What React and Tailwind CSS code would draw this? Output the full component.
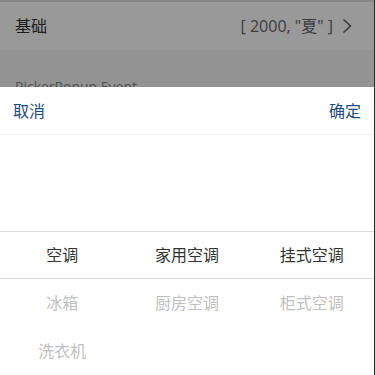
import React from 'react';

const columns = [
  ['空调', '冰箱', '洗衣机'],
  ['家用空调', '厨房空调'],
  ['挂式空调', '柜式空调'],
];

const ROW = 'h-12 flex items-center justify-center text-base';

const PickerColumn = ({ items }) => (
  <div className="flex-1 flex flex-col">
    {/* two empty rows above the selected one */}
    <div className="h-12" />
    <div className="h-12" />
    {items.map((item, i) => (
      <div key={item} className={`${ROW} ${i === 0 ? 'text-[#333]' : 'text-[#bfbfbf]'}`}>
        {item}
      </div>
    ))}
  </div>
);

const App = () => {
  return (
    <div
      className="relative h-[375px] w-full overflow-hidden bg-[#f5f5f5] border-r border-[#2a2a2a]"
      style={{ fontFamily: '"Open Sans", "Noto Sans CJK SC", sans-serif' }}
    >
      {/* page behind the popup */}
      <div className="h-[2px] bg-[#e2e2e2]" />
      <div className="h-12 bg-white flex items-center justify-between pl-[15px] pr-[22px]">
        <span className="text-base text-[#333]">基础</span>
        <div className="flex items-center gap-[9px]">
          <span className="text-base text-[#666]">[ 2000, "夏" ]</span>
          <svg width="10" height="16" viewBox="0 0 10 16" fill="none" stroke="#555" strokeWidth="1.4">
            <path d="M1.5 1.5 L8.5 8 L1.5 14.5" />
          </svg>
        </div>
      </div>
      <div className="pt-[27px] pl-[15px] text-sm text-[#888]">PickerPopup Event</div>

      {/* mask */}
      <div className="absolute inset-0 bg-black/40" />

      {/* popup */}
      <div className="absolute left-0 right-0 bottom-0 h-[288px] bg-white flex flex-col">
        <div className="h-12 flex items-center justify-between px-[13px] border-b border-[#f4f4f4]">
          <span className="text-base text-[#1f4b7c]">取消</span>
          <span className="text-base text-[#1f4b7c]">确定</span>
        </div>
        <div className="relative flex-1 flex">
          {columns.map((items, i) => (
            <PickerColumn key={i} items={items} />
          ))}
          <div className="absolute left-0 right-0 top-[96px] h-12 border-y border-[#dcdcdc] pointer-events-none" />
        </div>
      </div>
    </div>
  );
};

export default App;
